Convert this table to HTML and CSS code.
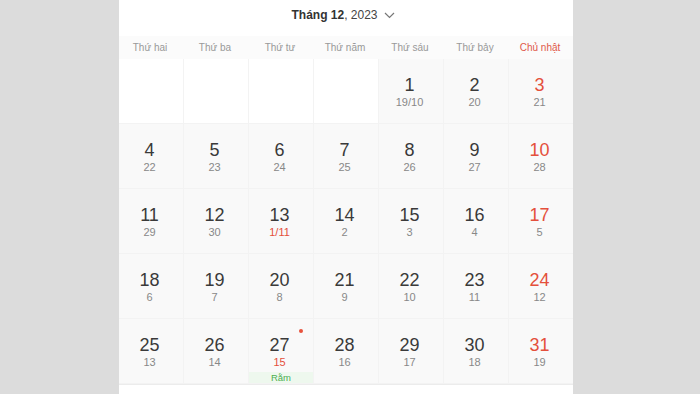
FILE: index.html
```html
<!DOCTYPE html>
<html lang="vi">
<head>
<meta charset="utf-8">
<link rel="stylesheet" href="styles.css">
</head>
<body>
<div class="panel">
  <div class="title">
    <span class="month">Tháng 12</span><span class="year">, 2023</span>
    <svg class="chev" width="11" height="7" viewBox="0 0 11 7"><path d="M1 1 L5.5 5.5 L10 1" fill="none" stroke="#777" stroke-width="1.2"/></svg>
  </div>
  <div class="weekdays">
    <div>Thứ hai</div><div>Thứ ba</div><div>Thứ tư</div><div>Thứ năm</div><div>Thứ sáu</div><div>Thứ bảy</div><div class="sun">Chủ nhật</div>
  </div>
  <div class="grid">
    <div class="cell empty"></div><div class="cell empty"></div><div class="cell empty"></div><div class="cell empty"></div>
    <div class="cell"><span class="d">1</span><span class="l">19/10</span></div>
    <div class="cell"><span class="d">2</span><span class="l">20</span></div>
    <div class="cell sun"><span class="d">3</span><span class="l">21</span></div>

    <div class="cell"><span class="d">4</span><span class="l">22</span></div>
    <div class="cell"><span class="d">5</span><span class="l">23</span></div>
    <div class="cell"><span class="d">6</span><span class="l">24</span></div>
    <div class="cell"><span class="d">7</span><span class="l">25</span></div>
    <div class="cell"><span class="d">8</span><span class="l">26</span></div>
    <div class="cell"><span class="d">9</span><span class="l">27</span></div>
    <div class="cell sun"><span class="d">10</span><span class="l">28</span></div>

    <div class="cell"><span class="d">11</span><span class="l">29</span></div>
    <div class="cell"><span class="d">12</span><span class="l">30</span></div>
    <div class="cell"><span class="d">13</span><span class="l red">1/11</span></div>
    <div class="cell"><span class="d">14</span><span class="l">2</span></div>
    <div class="cell"><span class="d">15</span><span class="l">3</span></div>
    <div class="cell"><span class="d">16</span><span class="l">4</span></div>
    <div class="cell sun"><span class="d">17</span><span class="l">5</span></div>

    <div class="cell"><span class="d">18</span><span class="l">6</span></div>
    <div class="cell"><span class="d">19</span><span class="l">7</span></div>
    <div class="cell"><span class="d">20</span><span class="l">8</span></div>
    <div class="cell"><span class="d">21</span><span class="l">9</span></div>
    <div class="cell"><span class="d">22</span><span class="l">10</span></div>
    <div class="cell"><span class="d">23</span><span class="l">11</span></div>
    <div class="cell sun"><span class="d">24</span><span class="l">12</span></div>

    <div class="cell"><span class="d">25</span><span class="l">13</span></div>
    <div class="cell"><span class="d">26</span><span class="l">14</span></div>
    <div class="cell today"><span class="dot"></span><span class="d">27</span><span class="l red">15</span><span class="tag">Rằm</span></div>
    <div class="cell"><span class="d">28</span><span class="l">16</span></div>
    <div class="cell"><span class="d">29</span><span class="l">17</span></div>
    <div class="cell"><span class="d">30</span><span class="l">18</span></div>
    <div class="cell sun"><span class="d">31</span><span class="l">19</span></div>
  </div>
</div>
</body>
</html>
```
FILE: styles.css
```css
html, body {
  margin: 0;
  padding: 0;
  background: #dcdcdc;
  height: 394px;
  overflow: hidden;
  font-family: "Liberation Sans", Arial, sans-serif;
}
.panel {
  margin-left: 119px;
  width: 454px;
  height: 394px;
  background: #fff;
}
.title {
  height: 36px;
  display: flex;
  align-items: center;
  justify-content: center;
  padding-right: 6px;
  box-sizing: border-box;
  font-size: 12px;
  color: #333;
  padding-bottom: 6px;
}
.month { font-weight: bold; }
.year { color: #444; }
.chev { margin-left: 6px; }
.weekdays {
  display: grid;
  grid-template-columns: repeat(7, 64px);
  column-gap: 1px;
  height: 23px;
  background: #fbfbfb;
  font-size: 10px;
  color: #999;
}
.weekdays div {
  display: flex;
  align-items: center;
  justify-content: center;
  padding-right: 2px;
}
.weekdays .sun { color: #e0594a; }
.grid {
  display: grid;
  grid-template-columns: repeat(7, 64px);
  grid-auto-rows: 64px;
  gap: 1px;
  background: #f3f3f3;
  border-bottom: 1px solid #ececec;
  padding-bottom: 1px;
}
.cell {
  position: relative;
  background: #f9f9f9;
  display: flex;
  flex-direction: column;
  align-items: center;
  padding-top: 15px;
  padding-right: 3px;
  box-sizing: border-box;
}
.cell.empty { background: #fff; }
.d {
  font-size: 18px;
  line-height: 22px;
  color: #3a3a3a;
}
.l {
  font-size: 11px;
  line-height: 13px;
  color: #888;
}
.sun .d { color: #e4503c; }
.l.red { color: #e4503c; }
.tag {
  margin-top: auto;
  align-self: stretch;
  margin-right: -3px;
  height: 11px;
  line-height: 11px;
  text-align: center;
  font-size: 9.5px;
  color: #4caf50;
  background: #eef8ee;
}
.dot {
  position: absolute;
  top: 10px;
  right: 10px;
  width: 4px;
  height: 4px;
  border-radius: 50%;
  background: #e8523c;
}
```
